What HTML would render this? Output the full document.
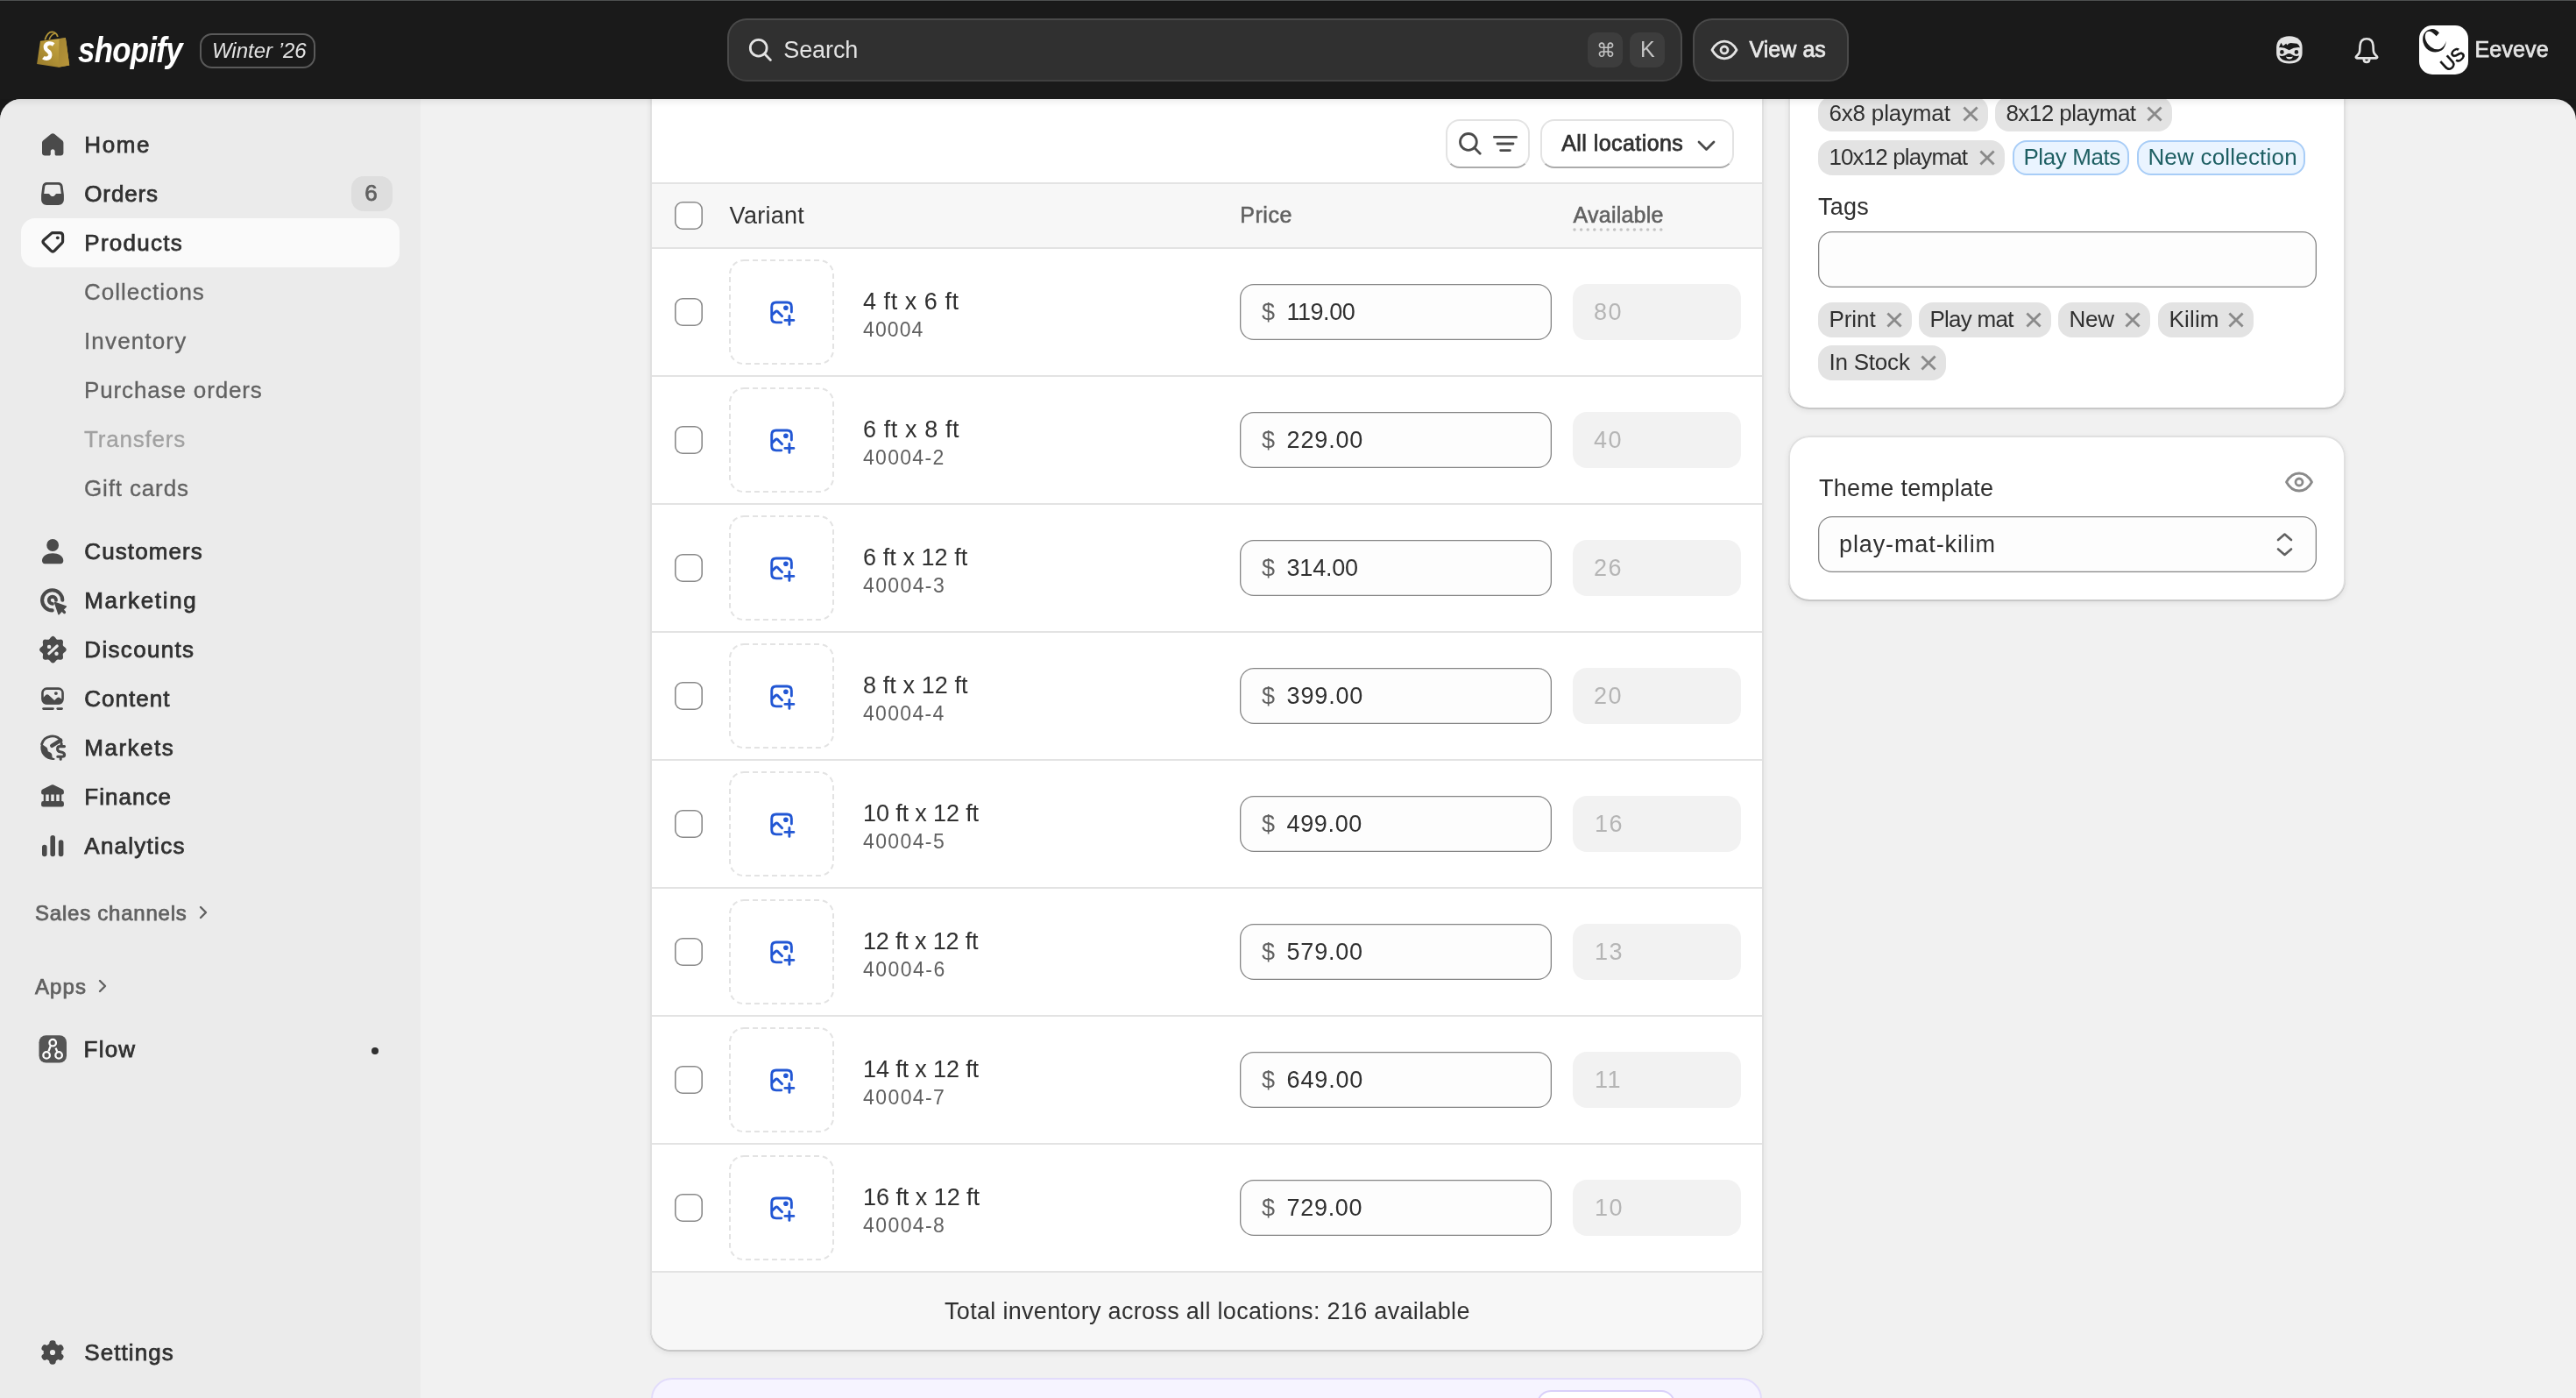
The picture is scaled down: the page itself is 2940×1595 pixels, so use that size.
<!DOCTYPE html>
<html><head><meta charset="utf-8">
<style>
*{box-sizing:border-box;margin:0;padding:0}
html,body{width:2940px;height:1595px;overflow:hidden;background:#1a1a1a;font-family:"Liberation Sans",sans-serif;color:#303030;position:relative}
.a{position:absolute}
.t{position:absolute;white-space:nowrap;line-height:40px;height:40px}
#root{position:absolute;left:0;top:0;width:2940px;height:1595px;will-change:transform}
svg{display:block;overflow:visible}
</style></head><body><div id="root">
<div class="a" style="left:0px;top:113px;width:2940px;height:1482px;background:#f1f1f1;border-radius:24px 24px 0 0"></div>
<div class="a" style="left:0px;top:113px;width:480px;height:1482px;background:#ebebeb;border-top-left-radius:24px"></div>
<div class="a" style="left:24px;top:249px;width:432px;height:56px;background:#fafafa;border-radius:16px"></div>
<div class="t" style="left:96.3px;top:145.2px;font-size:26px;color:#303030;letter-spacing:1.617px;-webkit-text-stroke:0.75px #303030">Home</div>
<div class="t" style="left:96.3px;top:200.9px;font-size:26px;color:#303030;letter-spacing:0.85px;-webkit-text-stroke:0.75px #303030">Orders</div>
<div class="t" style="left:96.3px;top:256.6px;font-size:26px;color:#303030;letter-spacing:1.25px;-webkit-text-stroke:0.75px #303030">Products</div>
<div class="t" style="left:96.3px;top:609.2px;font-size:26px;color:#303030;letter-spacing:1.106px;-webkit-text-stroke:0.75px #303030">Customers</div>
<div class="t" style="left:96.3px;top:665.2px;font-size:26px;color:#303030;letter-spacing:1.656px;-webkit-text-stroke:0.75px #303030">Marketing</div>
<div class="t" style="left:96.3px;top:721.2px;font-size:26px;color:#303030;letter-spacing:1.319px;-webkit-text-stroke:0.75px #303030">Discounts</div>
<div class="t" style="left:96.3px;top:777.2px;font-size:26px;color:#303030;letter-spacing:1.008px;-webkit-text-stroke:0.75px #303030">Content</div>
<div class="t" style="left:96.3px;top:833.2px;font-size:26px;color:#303030;letter-spacing:1.492px;-webkit-text-stroke:0.75px #303030">Markets</div>
<div class="t" style="left:96.3px;top:889.2px;font-size:26px;color:#303030;letter-spacing:1.042px;-webkit-text-stroke:0.75px #303030">Finance</div>
<div class="t" style="left:96.3px;top:945.2px;font-size:26px;color:#303030;letter-spacing:1.256px;-webkit-text-stroke:0.75px #303030">Analytics</div>
<div class="t" style="left:95.6px;top:1177px;font-size:26px;color:#303030;letter-spacing:1.217px;-webkit-text-stroke:0.75px #303030">Flow</div>
<div class="t" style="left:96.3px;top:1523px;font-size:26px;color:#303030;letter-spacing:1.079px;-webkit-text-stroke:0.75px #303030">Settings</div>
<div class="t" style="left:96px;top:313.2px;font-size:26px;color:#616161;letter-spacing:0.97px;-webkit-text-stroke:0.3px #616161">Collections</div>
<div class="t" style="left:96px;top:369.2px;font-size:26px;color:#616161;letter-spacing:1.15px;-webkit-text-stroke:0.3px #616161">Inventory</div>
<div class="t" style="left:96px;top:425.2px;font-size:26px;color:#616161;letter-spacing:0.864px;-webkit-text-stroke:0.3px #616161">Purchase orders</div>
<div class="t" style="left:96px;top:481.2px;font-size:26px;color:#a1a1a1;letter-spacing:0.8px;-webkit-text-stroke:0.3px #a1a1a1">Transfers</div>
<div class="t" style="left:96px;top:537.2px;font-size:26px;color:#616161;letter-spacing:0.856px;-webkit-text-stroke:0.3px #616161">Gift cards</div>
<div class="a" style="left:401px;top:201px;width:47px;height:40px;background:#dedede;border-radius:14px"></div>
<div class="t" style="left:416.3px;top:200px;font-size:26px;color:#616161;-webkit-text-stroke-width:0.4px;-webkit-text-stroke:0.75px #616161">6</div>
<div class="t" style="left:40px;top:1021.8px;font-size:24px;color:#616161;letter-spacing:0.773px;-webkit-text-stroke:0.75px #616161">Sales channels</div>
<svg class="a" style="left:226px;top:1033px" width="12" height="16" viewBox="0 0 12 16"><path d="M3 2 L9 8 L3 14" fill="none" stroke="#616161" stroke-width="2.4" stroke-linecap="round" stroke-linejoin="round"/></svg>
<div class="t" style="left:40px;top:1106px;font-size:24px;color:#616161;letter-spacing:1.083px;-webkit-text-stroke:0.75px #616161">Apps</div>
<svg class="a" style="left:111px;top:1117px" width="12" height="16" viewBox="0 0 12 16"><path d="M3 2 L9 8 L3 14" fill="none" stroke="#616161" stroke-width="2.4" stroke-linecap="round" stroke-linejoin="round"/></svg>
<div class="a" style="left:423.5px;top:1194.5px;width:8px;height:8px;background:#303030;border-radius:4px"></div>
<svg class="a" style="left:47.5px;top:151.5px" width="25" height="26" viewBox="0 0 25 26"><path fill="#4a4a4a" d="M12.2 0.2 C11.4 0.2 10.7 0.5 10.1 1 L1.3 8.3 C0.5 9 0 10 0 11.1 V22.4 C0 24.1 1.4 25.5 3.1 25.5 H8 C9 25.5 9.8 24.7 9.8 23.7 V20.6 C9.8 19.3 10.9 18.3 12.2 18.3 C13.5 18.3 14.6 19.3 14.6 20.6 V23.7 C14.6 24.7 15.4 25.5 16.4 25.5 H21.3 C23 25.5 24.4 24.1 24.4 22.4 V11.1 C24.4 10 23.9 9 23.1 8.3 L14.3 1 C13.7 0.5 13 0.2 12.2 0.2 Z"/></svg>
<svg class="a" style="left:47px;top:208px" width="26" height="26" viewBox="0 0 26 26"><path fill="#4a4a4a" fill-rule="evenodd" d="M6.3 0 H19.7 C22.2 0 24.2 1.8 24.6 4.3 L25.9 14.5 V19.8 C25.9 23.2 23.1 26 19.7 26 H6.3 C2.9 26 0.1 23.2 0.1 19.8 V14.5 L1.4 4.3 C1.8 1.8 3.8 0 6.3 0 Z M6.5 2.7 H19.5 C20.6 2.7 21.5 3.5 21.7 4.6 L22.8 13.1 H17.6 Q16.8 13.1 16.2 13.9 L15.4 15.1 Q14.9 15.9 14 15.9 H12 Q11.1 15.9 10.6 15.1 L9.8 13.9 Q9.2 13.1 8.4 13.1 H3.2 L4.3 4.6 C4.5 3.5 5.4 2.7 6.5 2.7 Z"/></svg>
<svg class="a" style="left:47px;top:263.5px" width="27" height="27" viewBox="0 0 27 27"><path fill="none" stroke="#303030" stroke-width="3.2" stroke-linejoin="round" d="M12.4 1.6 H21.2 C23.2 1.6 24.6 3 24.6 5 V11.2 C24.6 12 24.3 12.8 23.7 13.4 L15.4 21.9 C14 23.3 12.4 23.3 11 21.9 L3.1 14 C1.7 12.6 1.7 11.1 3.1 9.7 Z"/><circle cx="18.8" cy="7.3" r="1.9" fill="#303030"/></svg>
<svg class="a" style="left:47.9px;top:614.7px" width="25" height="29" viewBox="0 0 25 29"><circle cx="12.15" cy="7" r="6.9" fill="#4a4a4a"/><path fill="#4a4a4a" d="M0 24.8 C0 19.2 5.4 16.2 12.15 16.2 C18.9 16.2 24.3 19.2 24.3 24.8 C24.3 26.7 23 28.2 21.1 28.2 H3.2 C1.3 28.2 0 26.7 0 24.8 Z"/></svg>
<svg class="a" style="left:46.2px;top:670.8px" width="31" height="31" viewBox="0 0 31 31"><path fill="none" stroke="#4a4a4a" stroke-width="4.1" stroke-linecap="round" d="M25.3 13.8 A11.6 11.6 0 1 0 13.7 25.4"/><path fill="none" stroke="#4a4a4a" stroke-width="3.9" stroke-linecap="round" d="M18 13.8 A4.1 4.1 0 1 0 13.9 17.9"/><path fill="#4a4a4a" stroke="#4a4a4a" stroke-width="1.6" stroke-linejoin="round" d="M16.6 16.4 L29.3 20.9 L21 29.6 Z"/><path d="M24.6 24.6 L27.5 27.5" stroke="#4a4a4a" stroke-width="3.2" stroke-linecap="round"/></svg>
<svg class="a" style="left:44.7px;top:725.6px" width="31" height="31" viewBox="0 0 31 31"><polygon fill="#4a4a4a" points="15.40,-0.15 16.39,0.08 17.31,0.70 18.11,1.57 18.81,2.47 19.46,3.23 20.16,3.70 20.99,3.86 21.99,3.79 23.12,3.64 24.30,3.60 25.39,3.81 26.25,4.35 26.79,5.21 27.00,6.30 26.96,7.48 26.81,8.61 26.74,9.61 26.90,10.44 27.37,11.14 28.13,11.79 29.03,12.49 29.90,13.29 30.52,14.21 30.75,15.20 30.52,16.19 29.90,17.11 29.03,17.91 28.13,18.61 27.37,19.26 26.90,19.96 26.74,20.79 26.81,21.79 26.96,22.92 27.00,24.10 26.79,25.19 26.25,26.05 25.39,26.59 24.30,26.80 23.12,26.76 21.99,26.61 20.99,26.54 20.16,26.70 19.46,27.17 18.81,27.93 18.11,28.83 17.31,29.70 16.39,30.32 15.40,30.55 14.41,30.32 13.49,29.70 12.69,28.83 11.99,27.93 11.34,27.17 10.64,26.70 9.81,26.54 8.81,26.61 7.68,26.76 6.50,26.80 5.41,26.59 4.55,26.05 4.01,25.19 3.80,24.10 3.84,22.92 3.99,21.79 4.06,20.79 3.90,19.96 3.43,19.26 2.67,18.61 1.77,17.91 0.90,17.11 0.28,16.19 0.05,15.20 0.28,14.21 0.90,13.29 1.77,12.49 2.67,11.79 3.43,11.14 3.90,10.44 4.06,9.61 3.99,8.61 3.84,7.48 3.80,6.30 4.01,5.21 4.55,4.35 5.41,3.81 6.50,3.60 7.68,3.64 8.81,3.79 9.81,3.86 10.64,3.70 11.34,3.23 11.99,2.47 12.69,1.57 13.49,0.70 14.41,0.08"/><path d="M10.9 19.7 L20.2 11" stroke="#ebebeb" stroke-width="3.2" stroke-linecap="round"/><circle cx="11.1" cy="11.9" r="2.2" fill="#ebebeb"/><circle cx="19.5" cy="19.8" r="2.2" fill="#ebebeb"/></svg>
<svg class="a" style="left:47px;top:783.8px" width="26" height="27" viewBox="0 0 26 27"><rect x="1.45" y="1.65" width="23.1" height="16.75" rx="4.8" fill="none" stroke="#4a4a4a" stroke-width="2.6"/><path fill="#4a4a4a" d="M2 12.2 L5.2 9.0 Q6.85 7.4 8.6 9.0 L15.1 14.9 L18.3 12 Q19.7 10.8 21.2 12 L24.4 14.6 V15.6 Q24.4 19.5 20.5 19.5 H5.5 Q2 19.5 2 16 Z"/><circle cx="16.9" cy="7.1" r="1.95" fill="#4a4a4a"/><rect x="1.2" y="23.3" width="13.6" height="2.6" rx="1.3" fill="#4a4a4a"/><rect x="17.4" y="23.3" width="7.5" height="2.6" rx="1.3" fill="#4a4a4a"/></svg>
<svg class="a" style="left:46.2px;top:838.7px" width="30" height="30" viewBox="0 0 30 30"><path fill="none" stroke="#4a4a4a" stroke-width="2.8" stroke-linecap="round" d="M1.6 10.2 A12.4 12.4 0 0 1 24 6.6"/><path d="M23.2 5.6 L13.2 11.9" stroke="#4a4a4a" stroke-width="4.4" stroke-linecap="round"/><path fill="#4a4a4a" d="M1.2 9.4 L7.6 14.1 Q8.4 15.5 8.8 18.3 L11.8 19.8 Q13 20.6 13.3 21.9 L13.6 25.2 L16.6 26.4 Q17 27.5 15.4 27.9 A13.8 13.8 0 0 1 1.2 9.4 Z"/><path fill="none" stroke="#4a4a4a" stroke-width="3.1" stroke-linecap="round" d="M27.5 12.6 H22.2 Q19.6 12.6 19.6 15.4 Q19.6 18 22.5 18.7 L24.8 19.3 Q27.6 20.1 27.6 22.3 Q27.6 24.3 25 24.3 H19.8 M24.1 9.3 V12.5 M23.2 24.4 V27.3"/></svg>
<svg class="a" style="left:47px;top:895px" width="26" height="26" viewBox="0 0 26 26"><path fill="#4a4a4a" d="M13 0.2 Q13.6 0.2 14.2 0.5 L24.4 5.6 Q25.9 6.4 25.9 8.2 V9.6 Q25.9 11.6 23.9 11.6 H2.1 Q0.1 11.6 0.1 9.6 V8.2 Q0.1 6.4 1.6 5.6 L11.8 0.5 Q12.4 0.2 13 0.2 Z"/><rect x="2.75" y="11" width="2.5" height="8.6" fill="#4a4a4a"/><rect x="8.75" y="11" width="2.5" height="8.6" fill="#4a4a4a"/><rect x="14.75" y="11" width="2.5" height="8.6" fill="#4a4a4a"/><rect x="20.75" y="11" width="2.5" height="8.6" fill="#4a4a4a"/><rect x="0.1" y="19.1" width="25.8" height="6.3" rx="2.2" fill="#4a4a4a"/></svg>
<svg class="a" style="left:47.8px;top:952.7px" width="25" height="25" viewBox="0 0 25 25"><rect x="0" y="10.8" width="5.6" height="13.5" rx="2.8" fill="#4a4a4a"/><rect x="9.4" y="0" width="5.6" height="24.3" rx="2.8" fill="#4a4a4a"/><rect x="18.8" y="5.2" width="5.6" height="19.1" rx="2.8" fill="#4a4a4a"/></svg>
<svg class="a" style="left:43.8px;top:1181px" width="32" height="32" viewBox="0 0 32 32"><rect x="0.5" y="0.15" width="31.5" height="31.45" rx="8" fill="#555"/><g fill="none" stroke="#fff" stroke-width="2.3"><circle cx="16.2" cy="8.7" r="3.75"/><circle cx="9.1" cy="22.9" r="3.75"/><circle cx="23.1" cy="22.9" r="3.75"/><path d="M13.6 12.6 L11.4 18.4 M19.6 14.6 L21.2 18.6"/></g></svg>
<svg class="a" style="left:46px;top:1528.6px" width="28" height="28" viewBox="0 0 28 28"><rect x="10.3" y="0.3" width="7.4" height="9" rx="3.4" fill="#4a4a4a" transform="rotate(0 14 14)"/><rect x="10.3" y="0.3" width="7.4" height="9" rx="3.4" fill="#4a4a4a" transform="rotate(60 14 14)"/><rect x="10.3" y="0.3" width="7.4" height="9" rx="3.4" fill="#4a4a4a" transform="rotate(120 14 14)"/><rect x="10.3" y="0.3" width="7.4" height="9" rx="3.4" fill="#4a4a4a" transform="rotate(180 14 14)"/><rect x="10.3" y="0.3" width="7.4" height="9" rx="3.4" fill="#4a4a4a" transform="rotate(240 14 14)"/><rect x="10.3" y="0.3" width="7.4" height="9" rx="3.4" fill="#4a4a4a" transform="rotate(300 14 14)"/><circle cx="14" cy="14" r="10.4" fill="#4a4a4a"/><circle cx="14" cy="14" r="3.1" fill="#ebebeb"/></svg>
<div class="a" style="left:742px;top:40px;width:1271px;height:1502px;background:#fff;border-radius:24px;box-shadow:inset 0 -2px 0 #c8c8c8, inset 0 0 0 2px #e0e0e0, 0 2px 6px rgba(0,0,0,0.07)"></div>
<div class="a" style="left:1650px;top:136px;width:96px;height:56px;background:#fff;border:2px solid #e3e3e3;border-bottom-color:#ababab;border-radius:16px"></div>
<svg class="a" style="left:1664px;top:150px" width="28" height="28" viewBox="0 0 28 28"><circle cx="11.9" cy="11.9" r="9.4" fill="none" stroke="#4a4a4a" stroke-width="2.8"/><path d="M18.6 18.6 L25.2 25.2" stroke="#4a4a4a" stroke-width="2.8" stroke-linecap="round"/></svg>
<svg class="a" style="left:1703px;top:154px" width="30" height="20" viewBox="0 0 30 20"><path d="M2.4 2.4 H27.6 M6 10 H24 M9.6 17.6 H20.4" stroke="#4a4a4a" stroke-width="2.8" stroke-linecap="round"/></svg>
<div class="a" style="left:1758px;top:136px;width:221px;height:56px;background:#fff;border:2px solid #e3e3e3;border-bottom-color:#ababab;border-radius:16px"></div>
<div class="t" style="left:1782.2px;top:142.5px;font-size:25px;color:#303030;letter-spacing:0.438px;-webkit-text-stroke:0.75px #303030">All locations</div>
<svg class="a" style="left:1937px;top:160px" width="22" height="13" viewBox="0 0 22 13"><path d="M2 2 L10.5 10.5 L19 2" fill="none" stroke="#4a4a4a" stroke-width="2.8" stroke-linecap="round" stroke-linejoin="round"/></svg>
<div class="a" style="left:744px;top:208px;width:1267px;height:2px;background:#e3e3e3"></div>
<div class="a" style="left:744px;top:210px;width:1267px;height:72px;background:#f7f7f7"></div>
<div class="a" style="left:744px;top:282px;width:1267px;height:2px;background:#e3e3e3"></div>
<div class="a" style="left:770px;top:230px;width:32px;height:32px;background:#fff;box-shadow:inset 0 0 0 1.6px #8a8a8a;border-radius:9px"></div>
<div class="t" style="left:832.6px;top:225.9px;font-size:27px;color:#303030;letter-spacing:0.283px">Variant</div>
<div class="t" style="left:1415.2px;top:225.1px;font-size:25px;color:#616161;letter-spacing:0.562px;-webkit-text-stroke:0.55px #616161">Price</div>
<div class="t" style="left:1795.6px;top:225.1px;font-size:25px;color:#616161;letter-spacing:0.231px;-webkit-text-stroke:0.55px #616161">Available</div>
<svg class="a" style="left:1795px;top:260px" width="104" height="4" viewBox="0 0 104 4"><circle cx="2.0" cy="2" r="1.75" fill="#c4c4c4"/><circle cx="9.6" cy="2" r="1.75" fill="#c4c4c4"/><circle cx="17.2" cy="2" r="1.75" fill="#c4c4c4"/><circle cx="24.8" cy="2" r="1.75" fill="#c4c4c4"/><circle cx="32.4" cy="2" r="1.75" fill="#c4c4c4"/><circle cx="40.0" cy="2" r="1.75" fill="#c4c4c4"/><circle cx="47.6" cy="2" r="1.75" fill="#c4c4c4"/><circle cx="55.2" cy="2" r="1.75" fill="#c4c4c4"/><circle cx="62.8" cy="2" r="1.75" fill="#c4c4c4"/><circle cx="70.4" cy="2" r="1.75" fill="#c4c4c4"/><circle cx="78.0" cy="2" r="1.75" fill="#c4c4c4"/><circle cx="85.6" cy="2" r="1.75" fill="#c4c4c4"/><circle cx="93.2" cy="2" r="1.75" fill="#c4c4c4"/><circle cx="100.8" cy="2" r="1.75" fill="#c4c4c4"/></svg>
<div class="a" style="left:744px;top:428px;width:1267px;height:2px;background:#e3e3e3"></div>
<div class="a" style="left:770px;top:340px;width:32px;height:32px;background:#fff;box-shadow:inset 0 0 0 1.6px #8a8a8a;border-radius:9px"></div>
<svg class="a" style="left:832px;top:296px" width="120" height="120" viewBox="0 0 120 120"><rect x="1" y="1" width="118" height="118" rx="16" fill="none" stroke="#e3e3e3" stroke-width="2" stroke-dasharray="6 4"/></svg>
<svg class="a" style="left:877px;top:341.5px" width="32" height="32" viewBox="0 0 32 32"><g fill="none" stroke="#2257d4" stroke-width="2.9" stroke-linecap="round" stroke-linejoin="round"><path d="M14.8 25.85 H8.75 Q3.75 25.85 3.75 20.85 V7.95 Q3.75 2.95 8.75 2.95 H21.35 Q26.35 2.95 26.35 7.95 V14"/><path d="M4.6 16.9 L8.3 13.4 Q9.4 12.4 10.5 13.4 L15.6 18.8"/><path d="M23.9 18.4 V28.4 M18.9 23.4 H28.9"/></g><circle cx="19.9" cy="9.3" r="2.8" fill="#2257d4"/></svg>
<div class="t" style="left:985px;top:324px;font-size:27px;color:#303030;letter-spacing:0.54px">4 ft x 6 ft</div>
<div class="t" style="left:985px;top:355.8px;font-size:23px;color:#616161;letter-spacing:1.1px">40004</div>
<div class="a" style="left:1415px;top:324px;width:356px;height:64px;background:#fdfdfd;box-shadow:inset 0 0 0 1.3px #858585;border-radius:16px"></div>
<div class="t" style="left:1440px;top:336px;font-size:27px;color:#616161">$</div>
<div class="t" style="left:1468.5px;top:336px;font-size:27px;color:#303030;letter-spacing:-0.48px">119.00</div>
<div class="a" style="left:1795px;top:324px;width:192px;height:64px;background:#f2f2f2;border-radius:16px"></div>
<div class="t" style="left:1819px;top:336px;font-size:27px;color:#b5b5b5;letter-spacing:1.5px">80</div>
<div class="a" style="left:744px;top:574px;width:1267px;height:2px;background:#e3e3e3"></div>
<div class="a" style="left:770px;top:486px;width:32px;height:32px;background:#fff;box-shadow:inset 0 0 0 1.6px #8a8a8a;border-radius:9px"></div>
<svg class="a" style="left:832px;top:442px" width="120" height="120" viewBox="0 0 120 120"><rect x="1" y="1" width="118" height="118" rx="16" fill="none" stroke="#e3e3e3" stroke-width="2" stroke-dasharray="6 4"/></svg>
<svg class="a" style="left:877px;top:487.5px" width="32" height="32" viewBox="0 0 32 32"><g fill="none" stroke="#2257d4" stroke-width="2.9" stroke-linecap="round" stroke-linejoin="round"><path d="M14.8 25.85 H8.75 Q3.75 25.85 3.75 20.85 V7.95 Q3.75 2.95 8.75 2.95 H21.35 Q26.35 2.95 26.35 7.95 V14"/><path d="M4.6 16.9 L8.3 13.4 Q9.4 12.4 10.5 13.4 L15.6 18.8"/><path d="M23.9 18.4 V28.4 M18.9 23.4 H28.9"/></g><circle cx="19.9" cy="9.3" r="2.8" fill="#2257d4"/></svg>
<div class="t" style="left:985px;top:470px;font-size:27px;color:#303030;letter-spacing:0.6px">6 ft x 8 ft</div>
<div class="t" style="left:985px;top:501.79999999999995px;font-size:23px;color:#616161;letter-spacing:1.3px">40004-2</div>
<div class="a" style="left:1415px;top:470px;width:356px;height:64px;background:#fdfdfd;box-shadow:inset 0 0 0 1.3px #858585;border-radius:16px"></div>
<div class="t" style="left:1440px;top:482px;font-size:27px;color:#616161">$</div>
<div class="t" style="left:1468.5px;top:482px;font-size:27px;color:#303030;letter-spacing:0.86px">229.00</div>
<div class="a" style="left:1795px;top:470px;width:192px;height:64px;background:#f2f2f2;border-radius:16px"></div>
<div class="t" style="left:1819px;top:482px;font-size:27px;color:#b5b5b5;letter-spacing:1.5px">40</div>
<div class="a" style="left:744px;top:720px;width:1267px;height:2px;background:#e3e3e3"></div>
<div class="a" style="left:770px;top:632px;width:32px;height:32px;background:#fff;box-shadow:inset 0 0 0 1.6px #8a8a8a;border-radius:9px"></div>
<svg class="a" style="left:832px;top:588px" width="120" height="120" viewBox="0 0 120 120"><rect x="1" y="1" width="118" height="118" rx="16" fill="none" stroke="#e3e3e3" stroke-width="2" stroke-dasharray="6 4"/></svg>
<svg class="a" style="left:877px;top:633.5px" width="32" height="32" viewBox="0 0 32 32"><g fill="none" stroke="#2257d4" stroke-width="2.9" stroke-linecap="round" stroke-linejoin="round"><path d="M14.8 25.85 H8.75 Q3.75 25.85 3.75 20.85 V7.95 Q3.75 2.95 8.75 2.95 H21.35 Q26.35 2.95 26.35 7.95 V14"/><path d="M4.6 16.9 L8.3 13.4 Q9.4 12.4 10.5 13.4 L15.6 18.8"/><path d="M23.9 18.4 V28.4 M18.9 23.4 H28.9"/></g><circle cx="19.9" cy="9.3" r="2.8" fill="#2257d4"/></svg>
<div class="t" style="left:985px;top:616px;font-size:27px;color:#303030;letter-spacing:0.073px">6 ft x 12 ft</div>
<div class="t" style="left:985px;top:647.8px;font-size:23px;color:#616161;letter-spacing:1.383px">40004-3</div>
<div class="a" style="left:1415px;top:616px;width:356px;height:64px;background:#fdfdfd;box-shadow:inset 0 0 0 1.3px #858585;border-radius:16px"></div>
<div class="t" style="left:1440px;top:628px;font-size:27px;color:#616161">$</div>
<div class="t" style="left:1468.5px;top:628px;font-size:27px;color:#303030;letter-spacing:-0.2px">314.00</div>
<div class="a" style="left:1795px;top:616px;width:192px;height:64px;background:#f2f2f2;border-radius:16px"></div>
<div class="t" style="left:1819px;top:628px;font-size:27px;color:#b5b5b5;letter-spacing:1.5px">26</div>
<div class="a" style="left:744px;top:866px;width:1267px;height:2px;background:#e3e3e3"></div>
<div class="a" style="left:770px;top:778px;width:32px;height:32px;background:#fff;box-shadow:inset 0 0 0 1.6px #8a8a8a;border-radius:9px"></div>
<svg class="a" style="left:832px;top:734px" width="120" height="120" viewBox="0 0 120 120"><rect x="1" y="1" width="118" height="118" rx="16" fill="none" stroke="#e3e3e3" stroke-width="2" stroke-dasharray="6 4"/></svg>
<svg class="a" style="left:877px;top:779.5px" width="32" height="32" viewBox="0 0 32 32"><g fill="none" stroke="#2257d4" stroke-width="2.9" stroke-linecap="round" stroke-linejoin="round"><path d="M14.8 25.85 H8.75 Q3.75 25.85 3.75 20.85 V7.95 Q3.75 2.95 8.75 2.95 H21.35 Q26.35 2.95 26.35 7.95 V14"/><path d="M4.6 16.9 L8.3 13.4 Q9.4 12.4 10.5 13.4 L15.6 18.8"/><path d="M23.9 18.4 V28.4 M18.9 23.4 H28.9"/></g><circle cx="19.9" cy="9.3" r="2.8" fill="#2257d4"/></svg>
<div class="t" style="left:985px;top:762px;font-size:27px;color:#303030;letter-spacing:0.091px">8 ft x 12 ft</div>
<div class="t" style="left:985px;top:793.8px;font-size:23px;color:#616161;letter-spacing:1.333px">40004-4</div>
<div class="a" style="left:1415px;top:762px;width:356px;height:64px;background:#fdfdfd;box-shadow:inset 0 0 0 1.3px #858585;border-radius:16px"></div>
<div class="t" style="left:1440px;top:774px;font-size:27px;color:#616161">$</div>
<div class="t" style="left:1468.5px;top:774px;font-size:27px;color:#303030;letter-spacing:0.86px">399.00</div>
<div class="a" style="left:1795px;top:762px;width:192px;height:64px;background:#f2f2f2;border-radius:16px"></div>
<div class="t" style="left:1819px;top:774px;font-size:27px;color:#b5b5b5;letter-spacing:1.5px">20</div>
<div class="a" style="left:744px;top:1012px;width:1267px;height:2px;background:#e3e3e3"></div>
<div class="a" style="left:770px;top:924px;width:32px;height:32px;background:#fff;box-shadow:inset 0 0 0 1.6px #8a8a8a;border-radius:9px"></div>
<svg class="a" style="left:832px;top:880px" width="120" height="120" viewBox="0 0 120 120"><rect x="1" y="1" width="118" height="118" rx="16" fill="none" stroke="#e3e3e3" stroke-width="2" stroke-dasharray="6 4"/></svg>
<svg class="a" style="left:877px;top:925.5px" width="32" height="32" viewBox="0 0 32 32"><g fill="none" stroke="#2257d4" stroke-width="2.9" stroke-linecap="round" stroke-linejoin="round"><path d="M14.8 25.85 H8.75 Q3.75 25.85 3.75 20.85 V7.95 Q3.75 2.95 8.75 2.95 H21.35 Q26.35 2.95 26.35 7.95 V14"/><path d="M4.6 16.9 L8.3 13.4 Q9.4 12.4 10.5 13.4 L15.6 18.8"/><path d="M23.9 18.4 V28.4 M18.9 23.4 H28.9"/></g><circle cx="19.9" cy="9.3" r="2.8" fill="#2257d4"/></svg>
<div class="t" style="left:985px;top:908px;font-size:27px;color:#303030;letter-spacing:-0.125px">10 ft x 12 ft</div>
<div class="t" style="left:985px;top:939.8px;font-size:23px;color:#616161;letter-spacing:1.383px">40004-5</div>
<div class="a" style="left:1415px;top:908px;width:356px;height:64px;background:#fdfdfd;box-shadow:inset 0 0 0 1.3px #858585;border-radius:16px"></div>
<div class="t" style="left:1440px;top:920px;font-size:27px;color:#616161">$</div>
<div class="t" style="left:1468.5px;top:920px;font-size:27px;color:#303030;letter-spacing:0.66px">499.00</div>
<div class="a" style="left:1795px;top:908px;width:192px;height:64px;background:#f2f2f2;border-radius:16px"></div>
<div class="t" style="left:1820px;top:920px;font-size:27px;color:#b5b5b5;letter-spacing:1.5px">16</div>
<div class="a" style="left:744px;top:1158px;width:1267px;height:2px;background:#e3e3e3"></div>
<div class="a" style="left:770px;top:1070px;width:32px;height:32px;background:#fff;box-shadow:inset 0 0 0 1.6px #8a8a8a;border-radius:9px"></div>
<svg class="a" style="left:832px;top:1026px" width="120" height="120" viewBox="0 0 120 120"><rect x="1" y="1" width="118" height="118" rx="16" fill="none" stroke="#e3e3e3" stroke-width="2" stroke-dasharray="6 4"/></svg>
<svg class="a" style="left:877px;top:1071.5px" width="32" height="32" viewBox="0 0 32 32"><g fill="none" stroke="#2257d4" stroke-width="2.9" stroke-linecap="round" stroke-linejoin="round"><path d="M14.8 25.85 H8.75 Q3.75 25.85 3.75 20.85 V7.95 Q3.75 2.95 8.75 2.95 H21.35 Q26.35 2.95 26.35 7.95 V14"/><path d="M4.6 16.9 L8.3 13.4 Q9.4 12.4 10.5 13.4 L15.6 18.8"/><path d="M23.9 18.4 V28.4 M18.9 23.4 H28.9"/></g><circle cx="19.9" cy="9.3" r="2.8" fill="#2257d4"/></svg>
<div class="t" style="left:985px;top:1054px;font-size:27px;color:#303030;letter-spacing:-0.167px">12 ft x 12 ft</div>
<div class="t" style="left:985px;top:1085.8px;font-size:23px;color:#616161;letter-spacing:1.467px">40004-6</div>
<div class="a" style="left:1415px;top:1054px;width:356px;height:64px;background:#fdfdfd;box-shadow:inset 0 0 0 1.3px #858585;border-radius:16px"></div>
<div class="t" style="left:1440px;top:1066px;font-size:27px;color:#616161">$</div>
<div class="t" style="left:1468.5px;top:1066px;font-size:27px;color:#303030;letter-spacing:0.8px">579.00</div>
<div class="a" style="left:1795px;top:1054px;width:192px;height:64px;background:#f2f2f2;border-radius:16px"></div>
<div class="t" style="left:1820px;top:1066px;font-size:27px;color:#b5b5b5;letter-spacing:1.5px">13</div>
<div class="a" style="left:744px;top:1304px;width:1267px;height:2px;background:#e3e3e3"></div>
<div class="a" style="left:770px;top:1216px;width:32px;height:32px;background:#fff;box-shadow:inset 0 0 0 1.6px #8a8a8a;border-radius:9px"></div>
<svg class="a" style="left:832px;top:1172px" width="120" height="120" viewBox="0 0 120 120"><rect x="1" y="1" width="118" height="118" rx="16" fill="none" stroke="#e3e3e3" stroke-width="2" stroke-dasharray="6 4"/></svg>
<svg class="a" style="left:877px;top:1217.5px" width="32" height="32" viewBox="0 0 32 32"><g fill="none" stroke="#2257d4" stroke-width="2.9" stroke-linecap="round" stroke-linejoin="round"><path d="M14.8 25.85 H8.75 Q3.75 25.85 3.75 20.85 V7.95 Q3.75 2.95 8.75 2.95 H21.35 Q26.35 2.95 26.35 7.95 V14"/><path d="M4.6 16.9 L8.3 13.4 Q9.4 12.4 10.5 13.4 L15.6 18.8"/><path d="M23.9 18.4 V28.4 M18.9 23.4 H28.9"/></g><circle cx="19.9" cy="9.3" r="2.8" fill="#2257d4"/></svg>
<div class="t" style="left:985px;top:1200px;font-size:27px;color:#303030;letter-spacing:-0.125px">14 ft x 12 ft</div>
<div class="t" style="left:985px;top:1231.8px;font-size:23px;color:#616161;letter-spacing:1.417px">40004-7</div>
<div class="a" style="left:1415px;top:1200px;width:356px;height:64px;background:#fdfdfd;box-shadow:inset 0 0 0 1.3px #858585;border-radius:16px"></div>
<div class="t" style="left:1440px;top:1212px;font-size:27px;color:#616161">$</div>
<div class="t" style="left:1468.5px;top:1212px;font-size:27px;color:#303030;letter-spacing:0.86px">649.00</div>
<div class="a" style="left:1795px;top:1200px;width:192px;height:64px;background:#f2f2f2;border-radius:16px"></div>
<div class="t" style="left:1820px;top:1212px;font-size:27px;color:#b5b5b5;letter-spacing:1.5px">11</div>
<div class="a" style="left:744px;top:1450px;width:1267px;height:2px;background:#e3e3e3"></div>
<div class="a" style="left:770px;top:1362px;width:32px;height:32px;background:#fff;box-shadow:inset 0 0 0 1.6px #8a8a8a;border-radius:9px"></div>
<svg class="a" style="left:832px;top:1318px" width="120" height="120" viewBox="0 0 120 120"><rect x="1" y="1" width="118" height="118" rx="16" fill="none" stroke="#e3e3e3" stroke-width="2" stroke-dasharray="6 4"/></svg>
<svg class="a" style="left:877px;top:1363.5px" width="32" height="32" viewBox="0 0 32 32"><g fill="none" stroke="#2257d4" stroke-width="2.9" stroke-linecap="round" stroke-linejoin="round"><path d="M14.8 25.85 H8.75 Q3.75 25.85 3.75 20.85 V7.95 Q3.75 2.95 8.75 2.95 H21.35 Q26.35 2.95 26.35 7.95 V14"/><path d="M4.6 16.9 L8.3 13.4 Q9.4 12.4 10.5 13.4 L15.6 18.8"/><path d="M23.9 18.4 V28.4 M18.9 23.4 H28.9"/></g><circle cx="19.9" cy="9.3" r="2.8" fill="#2257d4"/></svg>
<div class="t" style="left:985px;top:1346px;font-size:27px;color:#303030;letter-spacing:-0.042px">16 ft x 12 ft</div>
<div class="t" style="left:985px;top:1377.8px;font-size:23px;color:#616161;letter-spacing:1.417px">40004-8</div>
<div class="a" style="left:1415px;top:1346px;width:356px;height:64px;background:#fdfdfd;box-shadow:inset 0 0 0 1.3px #858585;border-radius:16px"></div>
<div class="t" style="left:1440px;top:1358px;font-size:27px;color:#616161">$</div>
<div class="t" style="left:1468.5px;top:1358px;font-size:27px;color:#303030;letter-spacing:0.7px">729.00</div>
<div class="a" style="left:1795px;top:1346px;width:192px;height:64px;background:#f2f2f2;border-radius:16px"></div>
<div class="t" style="left:1820px;top:1358px;font-size:27px;color:#b5b5b5;letter-spacing:1.5px">10</div>
<div class="a" style="left:744px;top:1452px;width:1267px;height:88px;background:#f7f7f7;border-radius:0 0 22px 22px"></div>
<div class="t" style="left:1078px;top:1476px;font-size:27px;color:#303030;letter-spacing:0.312px">Total inventory across all locations: 216 available</div>
<div class="a" style="left:743px;top:1572px;width:1268px;height:200px;background:#f6f4ff;border:2px solid #e2dcfb;border-radius:24px"></div>
<div class="a" style="left:1754px;top:1586px;width:158px;height:60px;background:#fff;border:2px solid #d9d0fa;border-radius:16px"></div>
<div class="a" style="left:2041px;top:40px;width:636px;height:427px;background:#fff;border-radius:24px;box-shadow:inset 0 -2px 0 #c8c8c8, inset 0 0 0 2px #e0e0e0, 0 2px 6px rgba(0,0,0,0.07)"></div>
<div class="a" style="left:2075px;top:110px;width:194px;height:40px;background:#e3e3e3;border-radius:16px"></div>
<div class="t" style="left:2087.4px;top:108.80000000000001px;font-size:26px;color:#303030;letter-spacing:-0.17px">6x8 playmat</div>
<svg class="a" style="left:2241px;top:122px" width="16" height="16" viewBox="0 0 16 16"><path d="M0.4 0.4 L15.6 15.6 M15.6 0.4 L0.4 15.6" stroke="#8a8a8a" stroke-width="2.8" stroke-linecap="butt"/></svg>
<div class="a" style="left:2277px;top:110px;width:202px;height:40px;background:#e3e3e3;border-radius:16px"></div>
<div class="t" style="left:2289.4px;top:108.80000000000001px;font-size:26px;color:#303030;letter-spacing:-0.545px">8x12 playmat</div>
<svg class="a" style="left:2451px;top:122px" width="16" height="16" viewBox="0 0 16 16"><path d="M0.4 0.4 L15.6 15.6 M15.6 0.4 L0.4 15.6" stroke="#8a8a8a" stroke-width="2.8" stroke-linecap="butt"/></svg>
<div class="a" style="left:2075px;top:160px;width:213px;height:40px;background:#e3e3e3;border-radius:16px"></div>
<div class="t" style="left:2087.4px;top:158.8px;font-size:26px;color:#303030;letter-spacing:-0.875px">10x12 playmat</div>
<svg class="a" style="left:2260px;top:172px" width="16" height="16" viewBox="0 0 16 16"><path d="M0.4 0.4 L15.6 15.6 M15.6 0.4 L0.4 15.6" stroke="#8a8a8a" stroke-width="2.8" stroke-linecap="butt"/></svg>
<div class="a" style="left:2297px;top:160px;width:133px;height:40px;background:#eaf4ff;border:2px solid #a8cdf7;border-radius:16px"></div>
<div class="t" style="left:2309.4px;top:158.8px;font-size:26px;color:#1e5f63;letter-spacing:-0.412px">Play Mats</div>
<div class="a" style="left:2439px;top:160px;width:192px;height:40px;background:#eaf4ff;border:2px solid #a8cdf7;border-radius:16px"></div>
<div class="t" style="left:2451.4px;top:158.8px;font-size:26px;color:#1e5f63;letter-spacing:0.2px">New collection</div>
<div class="t" style="left:2075px;top:216px;font-size:27px;color:#303030;letter-spacing:0.267px">Tags</div>
<div class="a" style="left:2075px;top:264px;width:569px;height:64px;background:#fdfdfd;box-shadow:inset 0 0 0 1.3px #858585;border-radius:16px"></div>
<div class="a" style="left:2075px;top:345px;width:107px;height:40px;background:#e3e3e3;border-radius:16px"></div>
<div class="t" style="left:2087.4px;top:343.8px;font-size:26px;color:#303030;letter-spacing:-0.05px">Print</div>
<svg class="a" style="left:2154px;top:357px" width="16" height="16" viewBox="0 0 16 16"><path d="M0.4 0.4 L15.6 15.6 M15.6 0.4 L0.4 15.6" stroke="#8a8a8a" stroke-width="2.8" stroke-linecap="butt"/></svg>
<div class="a" style="left:2190px;top:345px;width:151px;height:40px;background:#e3e3e3;border-radius:16px"></div>
<div class="t" style="left:2202.4px;top:343.8px;font-size:26px;color:#303030;letter-spacing:-0.714px">Play mat</div>
<svg class="a" style="left:2313px;top:357px" width="16" height="16" viewBox="0 0 16 16"><path d="M0.4 0.4 L15.6 15.6 M15.6 0.4 L0.4 15.6" stroke="#8a8a8a" stroke-width="2.8" stroke-linecap="butt"/></svg>
<div class="a" style="left:2349px;top:345px;width:105px;height:40px;background:#e3e3e3;border-radius:16px"></div>
<div class="t" style="left:2361.4px;top:343.8px;font-size:26px;color:#303030;letter-spacing:-0.15px">New</div>
<svg class="a" style="left:2426px;top:357px" width="16" height="16" viewBox="0 0 16 16"><path d="M0.4 0.4 L15.6 15.6 M15.6 0.4 L0.4 15.6" stroke="#8a8a8a" stroke-width="2.8" stroke-linecap="butt"/></svg>
<div class="a" style="left:2463px;top:345px;width:109px;height:40px;background:#e3e3e3;border-radius:16px"></div>
<div class="t" style="left:2475.4px;top:343.8px;font-size:26px;color:#303030;letter-spacing:0.2px">Kilim</div>
<svg class="a" style="left:2544px;top:357px" width="16" height="16" viewBox="0 0 16 16"><path d="M0.4 0.4 L15.6 15.6 M15.6 0.4 L0.4 15.6" stroke="#8a8a8a" stroke-width="2.8" stroke-linecap="butt"/></svg>
<div class="a" style="left:2075px;top:394px;width:146px;height:40px;background:#e3e3e3;border-radius:16px"></div>
<div class="t" style="left:2087.4px;top:392.8px;font-size:26px;color:#303030;letter-spacing:-0.2px">In Stock</div>
<svg class="a" style="left:2193px;top:406px" width="16" height="16" viewBox="0 0 16 16"><path d="M0.4 0.4 L15.6 15.6 M15.6 0.4 L0.4 15.6" stroke="#8a8a8a" stroke-width="2.8" stroke-linecap="butt"/></svg>
<div class="a" style="left:2041px;top:497px;width:636px;height:189px;background:#fff;border-radius:24px;box-shadow:inset 0 -2px 0 #c8c8c8, inset 0 0 0 2px #e0e0e0, 0 2px 6px rgba(0,0,0,0.07)"></div>
<div class="t" style="left:2076px;top:536.7px;font-size:27px;color:#303030;letter-spacing:0.308px">Theme template</div>
<svg class="a" style="left:2607px;top:536px" width="34" height="28" viewBox="0 0 34 28"><path d="M2.5 14 Q8 4 17 4 Q26 4 31.5 14 Q26 24 17 24 Q8 24 2.5 14 Z" fill="none" stroke="#8a8a8a" stroke-width="2.8" stroke-linejoin="round"/><circle cx="17" cy="14" r="4" fill="none" stroke="#8a8a8a" stroke-width="2.8"/></svg>
<div class="a" style="left:2075px;top:589px;width:569px;height:64px;background:#fdfdfd;box-shadow:inset 0 0 0 1.3px #858585;border-radius:16px"></div>
<div class="t" style="left:2099px;top:601px;font-size:27px;color:#303030;letter-spacing:0.892px">play-mat-kilim</div>
<svg class="a" style="left:2597px;top:607px" width="22" height="29" viewBox="0 0 22 29"><path d="M3 9 L10.5 2.5 L18 9 M3 19.5 L10.5 26 L18 19.5" fill="none" stroke="#616161" stroke-width="2.6" stroke-linecap="round" stroke-linejoin="round"/></svg>
<div class="a" style="left:0;top:0;width:2940px;height:113px;background:#1a1a1a;z-index:10;box-shadow:0 2px 8px rgba(0,0,0,0.10)">
<div class="a" style="left:0px;top:0px;width:2940px;height:1px;background:#4e5050"></div>
<div class="a" style="left:0px;top:1px;width:2940px;height:1px;background:#171717"></div>
<svg class="a" style="left:42px;top:35.7px" width="38" height="42" viewBox="0 0 38 42"><defs><linearGradient id="bg1" x1="1" y1="0" x2="0" y2="1"><stop offset="0" stop-color="#d4b65a"/><stop offset="0.45" stop-color="#b89838"/><stop offset="1" stop-color="#977a2c"/></linearGradient><linearGradient id="bg2" x1="0" y1="0" x2="1" y2="1"><stop offset="0" stop-color="#a48632"/><stop offset="1" stop-color="#b8953a"/></linearGradient></defs><path d="M9.3 9.6 Q12 0.4 17.5 0.4 Q22.2 0.6 23.9 6" fill="none" stroke="#b39639" stroke-width="1.9"/><path d="M14.2 9 Q16.8 2.4 21 2.2" fill="none" stroke="#b39639" stroke-width="1.6"/><path d="M4 10.8 L32.9 7.2 L37.2 38.6 L24.7 40.8 L0.1 36.9 Z" fill="url(#bg1)"/><path d="M25.4 8 L32.9 7.2 L37.2 38.6 L24.7 40.8 Z" fill="url(#bg2)"/><path d="M19.2 15 Q16.6 12.9 13.6 13.5 Q9.6 14.4 9.9 18.2 Q10.1 20.6 12.9 22.4 Q15.5 24.2 15.2 27.1 Q14.7 30.5 11.2 30.8 Q9 30.9 7.4 29.6" fill="none" stroke="#fff" stroke-width="4.4"/></svg>
<div class="t" style="left:89px;top:35px;font-size:40px;color:#ffffff;font-weight:bold;letter-spacing:-0.8px;font-style:italic;line-height:44px;height:44px;transform:scaleX(0.87);transform-origin:0 0">shopify</div>
<div class="a" style="left:228px;top:38px;width:132px;height:40px;border:2px solid #5a5a5a;border-radius:14px"></div>
<div class="t" style="left:241.9px;top:38.099999999999994px;font-size:24px;color:#e3e3e3;font-style:italic">Winter ’26</div>
<div class="a" style="left:830px;top:21px;width:1090px;height:72px;background:#303030;border:2px solid #4a4a4a;border-bottom-color:#404040;border-radius:22px"></div>
<svg class="a" style="left:854px;top:43px" width="28" height="28" viewBox="0 0 28 28"><circle cx="11.7" cy="11.7" r="9.4" fill="none" stroke="#e3e3e3" stroke-width="2.8"/><path d="M18.6 18.6 L25.4 25.4" stroke="#e3e3e3" stroke-width="2.8" stroke-linecap="round"/></svg>
<div class="t" style="left:894.3px;top:36.900000000000006px;font-size:27px;color:#e3e3e3;letter-spacing:-0.1px">Search</div>
<div class="a" style="left:1812px;top:37px;width:40px;height:40px;background:#3d3d3d;border-radius:10px"></div>
<div class="t" style="left:1822px;top:38.2px;font-size:22px;color:#c4c4c4">⌘</div>
<div class="a" style="left:1860px;top:37px;width:40px;height:40px;background:#3d3d3d;border-radius:10px"></div>
<div class="t" style="left:1872.0px;top:36.2px;font-size:25px;color:#c4c4c4">K</div>
<div class="a" style="left:1932px;top:21px;width:178px;height:72px;background:#303030;border:2px solid #4a4a4a;border-bottom-color:#404040;border-radius:22px"></div>
<svg class="a" style="left:1952px;top:43px" width="32" height="28" viewBox="0 0 32 28"><path d="M2 14 Q7.5 4.2 16 4.2 Q24.5 4.2 30 14 Q24.5 23.8 16 23.8 Q7.5 23.8 2 14 Z" fill="none" stroke="#e3e3e3" stroke-width="2.8" stroke-linejoin="round"/><circle cx="16" cy="14" r="4" fill="none" stroke="#e3e3e3" stroke-width="2.8"/></svg>
<div class="t" style="left:1996.5px;top:35.8px;font-size:25px;color:#e8e8e8;letter-spacing:0.042px;-webkit-text-stroke:0.75px #e8e8e8">View as</div>
<svg class="a" style="left:2598px;top:41px" width="30" height="32" viewBox="0 0 30 32"><path fill="#e3e3e3" d="M14.85 0.3 C24 0.3 29.6 5.2 29.6 13 V19.5 C29.6 27.2 24 31.5 14.85 31.5 C5.7 31.5 0.1 27.2 0.1 19.5 V13 C0.1 5.2 5.7 0.3 14.85 0.3 Z"/><path fill="#1a1a1a" d="M2.9 13.2 L5.4 7.8 L7.6 11.6 L11.2 8.8 L12.4 10.4 Q13.8 7.9 16.3 7.9 L23.6 8.7 Q25.6 9.3 27 13.2 Q20.5 12.6 14.6 16.2 Q8.5 12.6 2.9 13.2 Z"/><circle cx="6.4" cy="18.4" r="2.3" fill="#1a1a1a"/><circle cx="22.9" cy="18.4" r="2.3" fill="#1a1a1a"/><path fill="#1a1a1a" d="M3.3 22.6 Q8.6 23.6 11.4 21.2 Q14.6 18.7 17.8 21.2 Q20.6 23.6 26.1 22.6 Q24 28.8 14.7 28.8 Q5.5 28.8 3.3 22.6 Z"/><path fill="#e3e3e3" d="M10.9 23.6 Q14.8 24.6 18.9 23.6 Q18 26.6 14.9 26.6 Q11.8 26.6 10.9 23.6 Z"/></svg>
<svg class="a" style="left:2685px;top:42px" width="32" height="31" viewBox="0 0 32 31"><path d="M16 2.2 Q9 2.2 8.5 10 L8.2 15.8 Q8 19.3 5 21.6 Q2.4 23.6 5.2 24.4 H26.8 Q29.6 23.6 27 21.6 Q24 19.3 23.8 15.8 L23.5 10 Q23 2.2 16 2.2 Z" fill="none" stroke="#e3e3e3" stroke-width="2.6" stroke-linejoin="round"/><path d="M12.6 25 Q13 29 16 29 Q19 29 19.4 25" fill="none" stroke="#e3e3e3" stroke-width="2.6"/></svg>
<div class="a" style="left:2761px;top:29px;width:56px;height:56px;background:#fff;border-radius:15px;overflow:hidden"><svg width="56" height="56" viewBox="0 0 56 56"><path fill="#1c1c1c" d="M22.9 8.5 Q19 3.6 14.4 4 Q8.3 4.8 5.6 9.5 Q3.2 14 4.6 19.5 Q6.5 26.5 13 29.5 Q19.5 31.8 25.5 28.6 Q30 25.8 30.9 17.5 Q29.5 23.5 24.5 26.4 Q19 28.8 13.2 24.5 Q7.8 20 6.8 14 Q6.5 9 9.2 7.2 Q11.8 6 14.5 7.8 Q17 9.3 19.6 12.3 Z"/><g transform="translate(38 38.5) rotate(-42)"><text x="0" y="7.5" text-anchor="middle" font-family="Liberation Sans" font-size="21" fill="#111" stroke="#111" stroke-width="0.7" letter-spacing="-0.2">US</text></g></svg></div>
<div class="t" style="left:2824.5px;top:35.900000000000006px;font-size:25px;color:#e3e3e3;letter-spacing:0.15px;-webkit-text-stroke:0.75px #e3e3e3">Eeveve</div>
</div>
</div><script>(function(){var w=window.innerWidth;if(w&&Math.abs(w-2940)>2){var k=w/2940;var r=document.getElementById("root");r.style.transform="scale("+k+")";r.style.transformOrigin="0 0";var d=document.documentElement,b=document.body;d.style.width=b.style.width=w+"px";d.style.height=b.style.height=(1595*k)+"px";}})();</script></body></html>
